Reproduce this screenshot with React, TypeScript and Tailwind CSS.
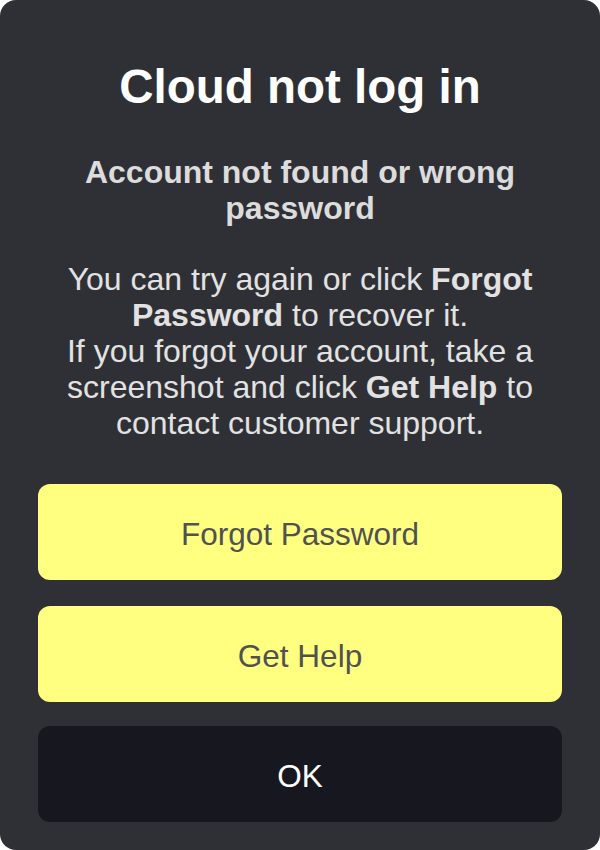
import React from 'react'

const App = () => {
    return (
        <div className="w-[600px] h-[850px] bg-white" style={{ fontFamily: '"Liberation Sans", Arial, sans-serif' }}>
            <div className="w-full h-full rounded-[16px] bg-[#2f3035] px-[38px] flex flex-col items-center text-center">
                <h1 className="mt-[59px] text-[47.5px] leading-[56px] font-bold text-white">Cloud not log in</h1>
                <h2 className="mt-[39px] text-[32px] leading-[36px] font-bold text-[#dcdcdc]">
                    Account not found or wrong password
                </h2>
                <p className="mt-[35px] text-[32px] leading-[36px] text-[#e2e2e2]">
                    You can try again or click <b>Forgot Password</b> to recover it.
                    <br />
                    If you forgot your account, take a screenshot and click <b>Get Help</b> to contact customer support.
                </p>

                <button className="mt-[43px] w-full h-[96px] pt-[5px] rounded-[12px] bg-[#ffff80] text-[31.5px] text-[#515151]">
                    Forgot Password
                </button>
                <button className="mt-[26px] w-full h-[96px] pt-[5px] rounded-[12px] bg-[#ffff80] text-[31.5px] text-[#515151]">
                    Get Help
                </button>
                <button className="mt-[24px] w-full h-[96px] pt-[5px] rounded-[12px] bg-[#16171f] text-[31.5px] text-white">
                    OK
                </button>
            </div>
        </div>
    )
}

export default App
